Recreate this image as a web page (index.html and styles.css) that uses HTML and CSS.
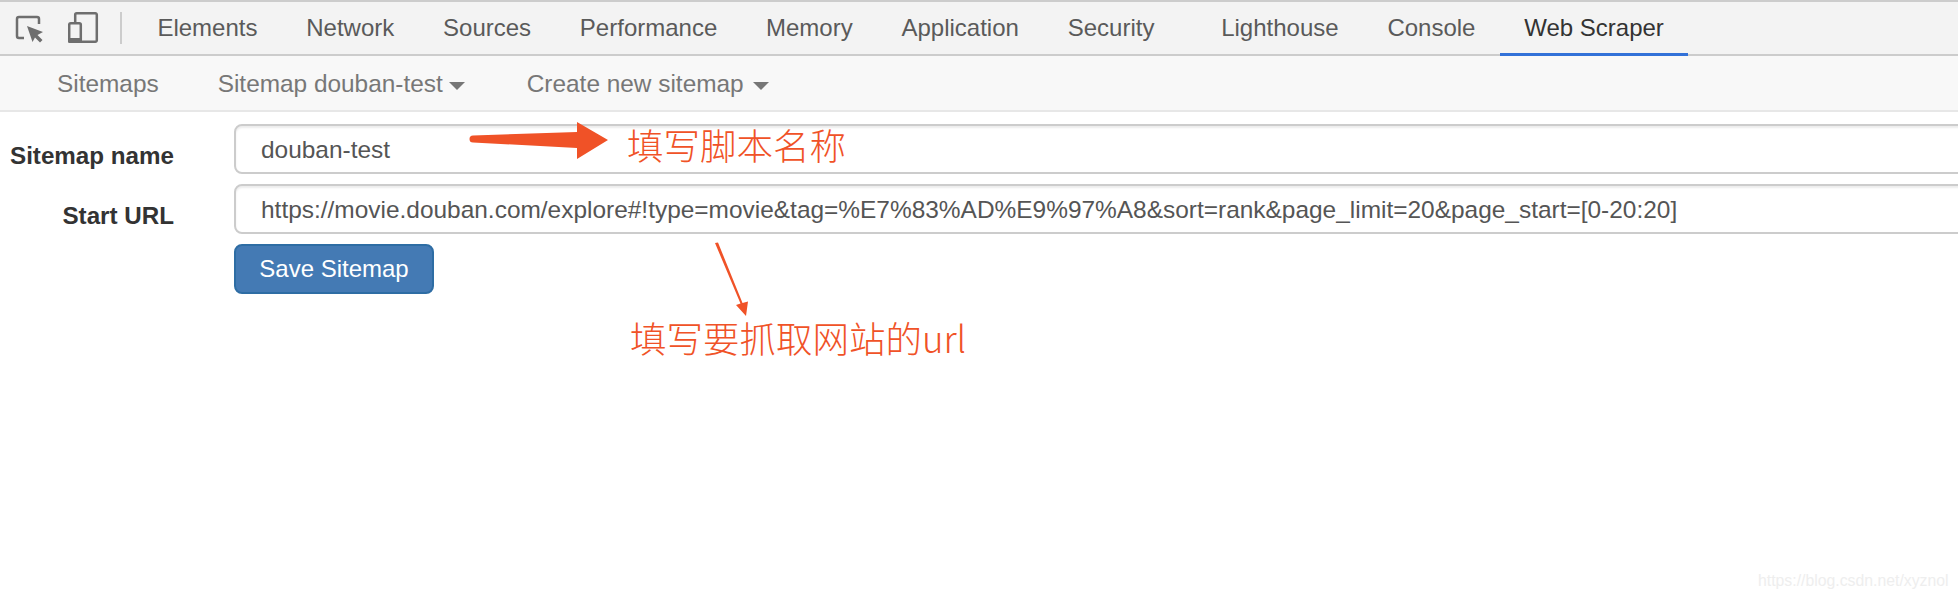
FILE: index.html
```html
<!DOCTYPE html>
<html lang="zh">
<head>
    <meta charset="UTF-8">
    <meta name="viewport" content="width=device-width, initial-scale=1.0">
    <title>Web Scraper</title>
    <link rel="stylesheet" href="styles.css">
</head>
<body>
    <div class="devtools-bar">
        <div class="devtools-icons">
            <svg class="tool-icon" width="44" height="52" viewBox="0 0 44 52">
                <path d="M19 38h-5a2 2 0 0 1-2-2V19a2 2 0 0 1 2-2h18a2 2 0 0 1 2 2v5" fill="none" stroke="#6e6e6e" stroke-width="2.5"/>
                <path d="M22 26l16 6-5.500 3 5 5-2.500 2.500-5-5-2.500 4.500z" fill="#6e6e6e"/>
            </svg>
            <svg class="tool-icon" width="36" height="52" viewBox="0 0 36 52">
                <path d="M7.200 22V14.700a1.500 1.500 0 0 1 1.500-1.500h18.600a1.500 1.500 0 0 1 1.500 1.500v25.600a1.500 1.500 0 0 1-1.500 1.500H13" fill="none" stroke="#6e6e6e" stroke-width="2.5"/>
                <rect x="1.200" y="23.200" width="11.600" height="18.600" rx="1.500" fill="none" stroke="#6e6e6e" stroke-width="2.5"/>
                <rect x="0" y="38" width="14" height="5" rx="1.500" fill="#6e6e6e"/>
            </svg>
        </div>
        <div class="devtools-sep"></div>
        <div class="devtools-tabs">
            <span class="devtools-tab">Elements</span>
            <span class="devtools-tab">Network</span>
            <span class="devtools-tab">Sources</span>
            <span class="devtools-tab">Performance</span>
            <span class="devtools-tab">Memory</span>
            <span class="devtools-tab">Application</span>
            <span class="devtools-tab">Security</span>
            <span class="devtools-tab tab-lighthouse">Lighthouse</span>
            <span class="devtools-tab">Console</span>
            <span class="devtools-tab active">Web Scraper</span>
        </div>
    </div>

    <nav class="navbar">
        <span class="nav-item item-sitemaps">Sitemaps</span>
        <span class="nav-item item-current">Sitemap douban-test<i class="caret"></i></span>
        <span class="nav-item item-create">Create new sitemap<i class="caret caret-far"></i></span>
    </nav>

    <form class="sitemap-form">
        <div class="form-row">
            <label class="form-label">Sitemap name</label>
            <input class="form-input" type="text" value="douban-test" readonly>
        </div>
        <div class="form-row">
            <label class="form-label">Start URL</label>
            <input class="form-input" type="text" value="https://movie.douban.com/explore#!type=movie&amp;tag=%E7%83%AD%E9%97%A8&amp;sort=rank&amp;page_limit=20&amp;page_start=[0-20:20]" readonly>
        </div>
        <div class="form-row">
            <span class="form-label"></span>
            <button class="save-btn" type="button">Save Sitemap</button>
        </div>
    </form>

    <!-- anotaciones encima de la captura -->
    <svg class="arrow-layer" width="800" height="220" viewBox="0 0 800 220">
        <path d="M7 13.500L111 10V0l31 18-31 19V26L7 20.500a3.500 3.500 0 0 1 0-7z" fill="#f05227"/>
        <path d="M249 121l3-.5L276.500 181l5.500-1.500-2 14.500-10-11 4.500-1.500z" fill="#f05227"/>
    </svg>
    <div class="note note-name">填写脚本名称</div>
    <div class="note note-url">填写要抓取网站的url</div>
    <div class="watermark">https://blog.csdn.net/xyznol</div>
</body>
</html>
```

FILE: styles.css
```css
html, body { margin: 0; padding: 0; }
body { width: 1958px; height: 598px; overflow: hidden; background-color: #fff; font-family: "Liberation Sans", Arial, sans-serif; position: relative; }

.devtools-bar { display: flex; align-items: stretch; height: 52px; background-color: #f3f3f3; border-top: 2px solid #ccc; border-bottom: 2px solid #ccc; }
.devtools-icons { display: flex; width: 120px; flex-shrink: 0; padding-left: 5px; box-sizing: border-box; }
.tool-icon { display: block; margin-top: -2px; }
.tool-icon + .tool-icon { margin-left: 19px; }
.devtools-sep { width: 2px; height: 32px; margin: 10px 0 0 0; background-color: #ccc; }
.devtools-tabs { display: flex; margin-left: 11px; }
.devtools-tab { padding: 0 24.4px; font-size: 24px; line-height: 52px; color: #5a5a5a; position: relative; white-space: nowrap; }
.tab-lighthouse { margin-left: 18px; }
.devtools-tab.active { color: #333; }
.devtools-tab.active::after { content: ""; position: absolute; left: 0; right: 0; bottom: -2px; height: 3px; background-color: #3271d8; }

.navbar { display: flex; height: 54px; background-color: #f8f8f8; border-bottom: 2px solid #e7e7e7; font-size: 24.4px; line-height: 55px; color: #777; }
.nav-item { display: block; white-space: nowrap; }
.item-sitemaps { margin-left: 57px; }
.item-current { margin-left: 59px; }
.item-create { margin-left: 62px; }
.caret { display: inline-block; margin-left: 6px; vertical-align: 2px; border-top: 8px solid #777; border-left: 8px solid transparent; border-right: 8px solid transparent; }
.caret-far { margin-left: 9px; }

.sitemap-form { display: flex; flex-direction: column; gap: 10px; padding-top: 12px; }
.form-row { display: flex; align-items: center; }
.form-label { width: 174px; margin-right: 60px; padding-top: 13px; flex-shrink: 0; text-align: right; font-size: 24.2px; font-weight: bold; color: #333; white-space: nowrap; }
.form-input { width: 1800px; height: 50px; flex-shrink: 0; box-sizing: border-box; padding: 2px 25px 0; border: 2px solid #ccc; border-radius: 8px; box-shadow: inset 0 2px 2px rgba(0,0,0,0.075); font-family: inherit; font-size: 24.45px; color: #555; background-color: #fff; outline: none; }
.save-btn { width: 200px; height: 50px; padding: 0; border: 2px solid #2e6da4; border-radius: 8px; background-color: #447ab4; font-family: inherit; font-size: 24px; color: #fff; }

.arrow-layer { position: absolute; left: 466px; top: 122px; }
.note { position: absolute; font-family: "Noto Sans CJK SC", "Liberation Sans", sans-serif; font-size: 36.5px; line-height: 44px; font-weight: 300; color: #f05227; white-space: nowrap; }
.note-name { left: 627px; top: 123px; }
.note-url { left: 630px; top: 316px; }
.watermark { position: absolute; left: 1758px; top: 572px; font-size: 15.8px; line-height: 17px; color: #eee; }
```
